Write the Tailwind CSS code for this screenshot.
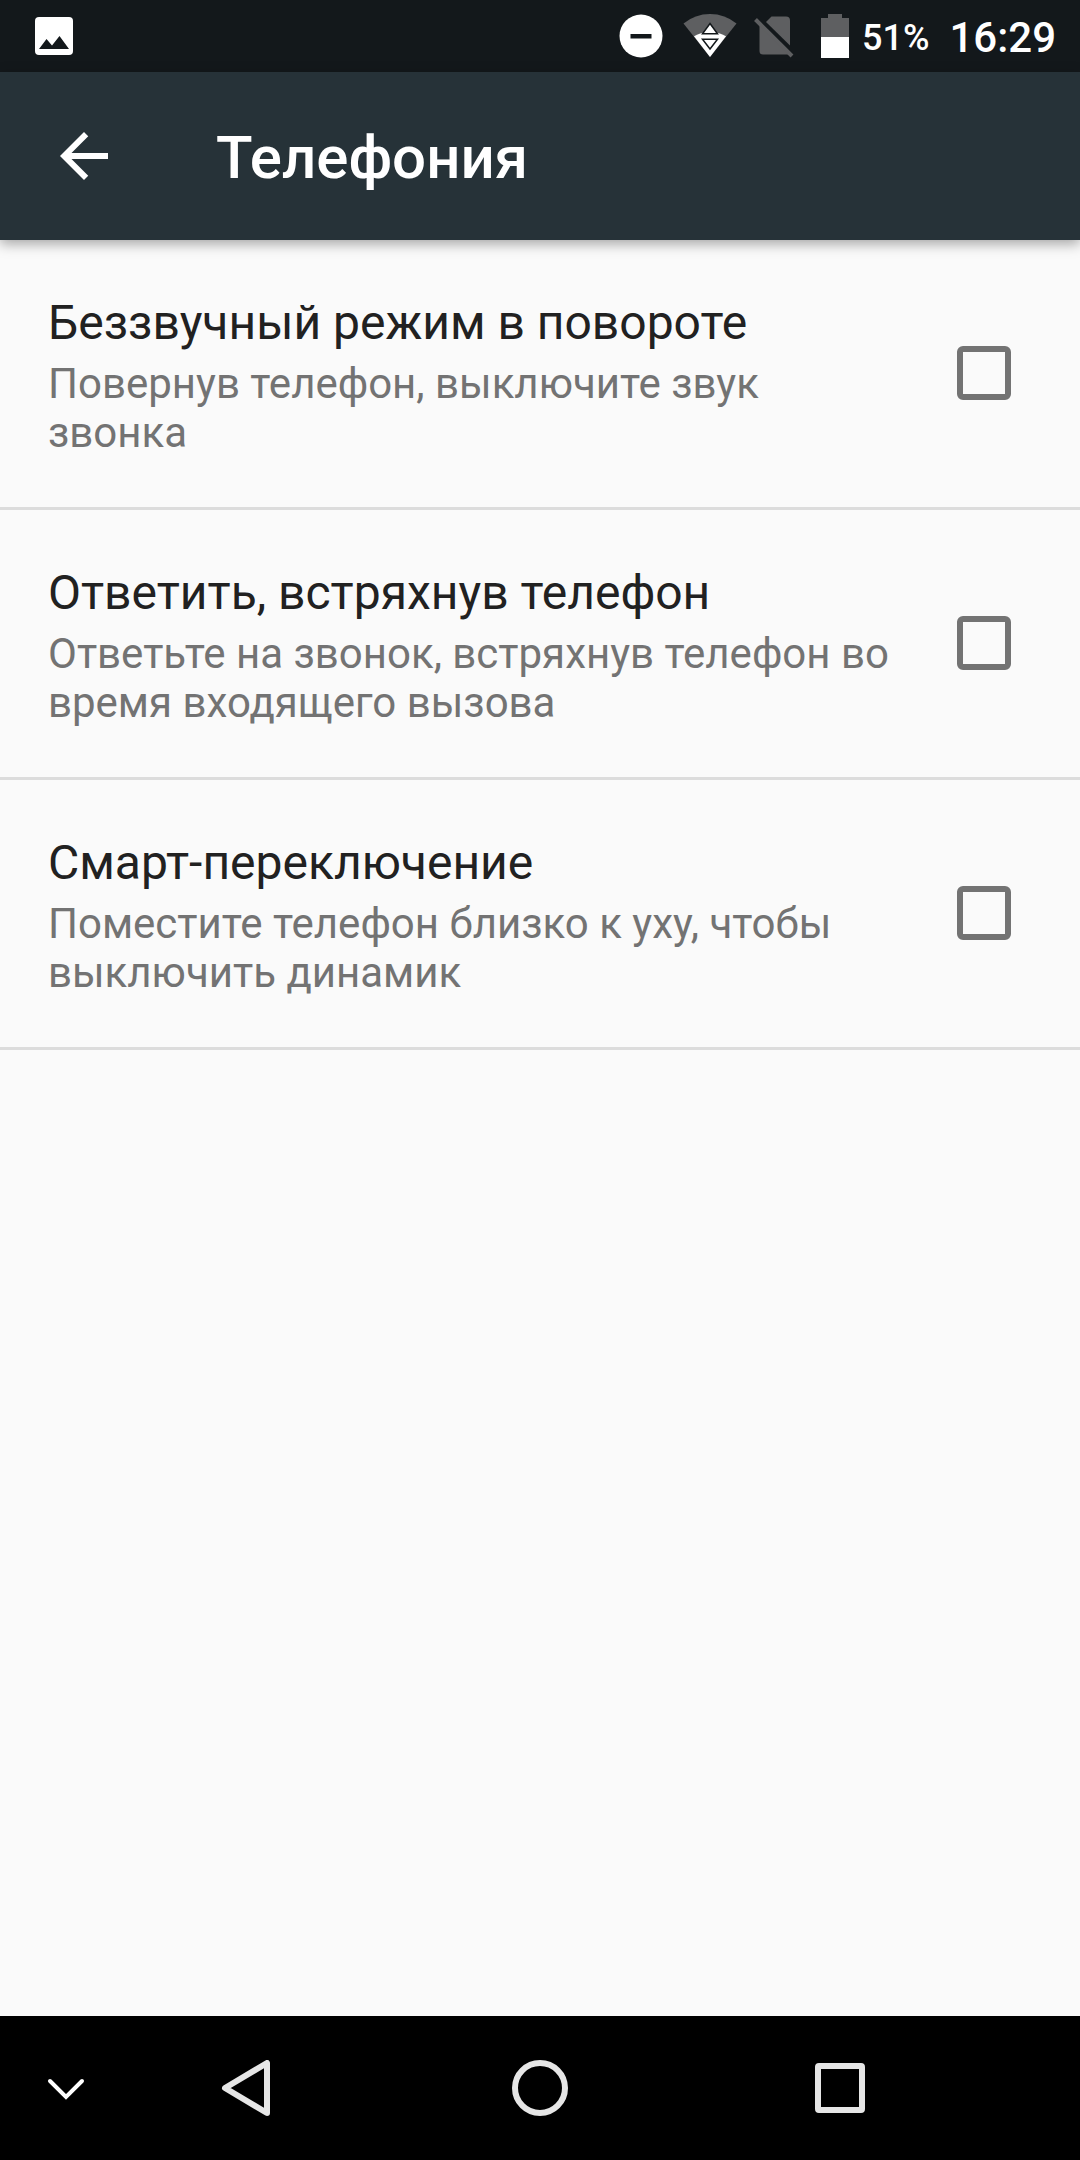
<!DOCTYPE html>
<html lang="ru">
  <head>
    <meta charset="UTF-8" />
    <meta name="viewport" content="width=device-width, initial-scale=1.0" />
    <title>Телефония</title>
    <script src="https://cdn.jsdelivr.net/npm/@tailwindcss/browser@4"></script>
  </head>
  <body class="flex min-h-screen flex-col bg-[#fafafa] font-[Roboto,sans-serif]">
    <!-- Status bar -->
    <div class="flex h-[72px] items-center justify-between bg-[#13181b] pr-6 pl-[35px] text-white">
      <svg class="h-[38px] w-[38px]" viewBox="0 0 38 38">
        <rect width="38" height="38" rx="4" fill="#fff" />
        <path d="M4 32 L11.500 22 L17 28.500 L24.500 19 L34 32 Z" fill="#13181b" />
      </svg>
      <div class="flex items-center">
        <svg class="mr-5 h-11 w-11" viewBox="0 0 44 44">
          <circle cx="22" cy="22" r="21.500" fill="#fff" />
          <rect x="11.500" y="20" width="21" height="4.500" fill="#13181b" />
        </svg>
        <svg class="mr-[17px] h-11 w-[54px]" viewBox="0 0 54 44">
          <path d="M0.500 9.500 Q12 0 27 0 Q42 0 53.500 9.500 L27 43 Z" fill="#5e5f61" />
          <path d="M11 22.300 Q18 18 27 18 Q36 18 43 22.300 L27 43 Z" fill="#fff" />
          <path d="M27 9.500 L34.500 19.700 H19.500 Z" fill="#fff" stroke="#13181b" stroke-width="1.500" />
          <path d="M27 35 L34.500 25.300 H19.500 Z" fill="#fff" stroke="#13181b" stroke-width="1.500" />
        </svg>
        <svg class="mr-[27px] h-11 w-10" viewBox="0 0 40 44">
          <path d="M12 8 L17.500 2.500 H32 Q36 2.500 36 6.500 V31.500 Z" fill="#5e5f61" />
          <path d="M5.500 10.500 L34.500 40.500 H9 Q5.500 40.500 5.500 37 Z" fill="#5e5f61" />
          <path d="M1.500 5.500 L38 42" stroke="#5e5f61" stroke-width="4" />
        </svg>
        <svg class="mr-[13px] h-11 w-7" viewBox="0 0 28 44">
          <path d="M0 4 H7 V0 H21 V4 H28 V24 H0 Z" fill="#5e5f61" />
          <path d="M0 23 H28 V44 H0 Z" fill="#fff" />
        </svg>
        <div class="flex items-center gap-5 pt-[3px] font-medium">
          <span class="text-[36px] leading-[42px]">51%</span>
          <span class="text-[42px] leading-[49px]">16:29</span>
        </div>
      </div>
    </div>

    <!-- App bar -->
    <header class="flex h-[168px] items-center gap-24 bg-[#263238] px-12 text-white shadow-[0_4px_12px_rgba(0,0,0,0.34)]">
      <button type="button" aria-label="Назад">
        <svg class="h-[72px] w-[72px]" viewBox="0 0 24 24" fill="currentColor">
          <path d="M20 11H7.830l5.590-5.590L12 4l-8 8 8 8 1.410-1.410L7.830 13H20v-2z" />
        </svg>
      </button>
      <h1 class="pt-1 text-[60px] leading-[70px] font-medium">Телефония</h1>
    </header>

    <!-- Settings list -->
    <main class="flex-1">
      <label class="flex items-center justify-between border-b-3 border-[#dcdcdc] pr-[69px] pl-12">
        <span class="flex max-w-[860px] flex-col gap-2 pt-[55px] pb-[50px]">
          <span class="text-[48px] leading-[56px] text-[#212121]">Беззвучный режим в повороте</span>
          <span class="text-[42px] leading-[49px] text-[#737373]">Повернув телефон, выключите звук звонка</span>
        </span>
        <input type="checkbox" class="mb-0.5 h-[54px] w-[54px] shrink-0 appearance-none rounded-md border-6 border-[#737373] checked:bg-[#737373]" />
      </label>
      <label class="flex items-center justify-between border-b-3 border-[#dcdcdc] pr-[69px] pl-12">
        <span class="flex max-w-[860px] flex-col gap-2 pt-[55px] pb-[50px]">
          <span class="text-[48px] leading-[56px] text-[#212121]">Ответить, встряхнув телефон</span>
          <span class="text-[42px] leading-[49px] text-[#737373]">Ответьте на звонок, встряхнув телефон во время входящего вызова</span>
        </span>
        <input type="checkbox" class="mb-0.5 h-[54px] w-[54px] shrink-0 appearance-none rounded-md border-6 border-[#737373] checked:bg-[#737373]" />
      </label>
      <label class="flex items-center justify-between border-b-3 border-[#dcdcdc] pr-[69px] pl-12">
        <span class="flex max-w-[860px] flex-col gap-2 pt-[55px] pb-[50px]">
          <span class="text-[48px] leading-[56px] text-[#212121]">Смарт-переключение</span>
          <span class="text-[42px] leading-[49px] text-[#737373]">Поместите телефон близко к уху, чтобы выключить динамик</span>
        </span>
        <input type="checkbox" class="mb-0.5 h-[54px] w-[54px] shrink-0 appearance-none rounded-md border-6 border-[#737373] checked:bg-[#737373]" />
      </label>
    </main>

    <!-- Navigation bar -->
    <nav class="flex h-36 items-center bg-black px-6 text-[#e6e6e6]">
      <button type="button" aria-label="Скрыть панель" class="flex w-[72px] justify-center">
        <svg class="h-14 w-[72px]" viewBox="0 0 72 56" fill="none" stroke="#fff" stroke-width="4" stroke-linecap="round">
          <path d="M26 21 L42 37 L58 21" />
        </svg>
      </button>
      <div class="grid flex-1 grid-cols-3 pr-[72px]">
        <button type="button" aria-label="Назад" class="flex justify-center">
          <svg class="h-14 w-14" viewBox="0 0 56 56" fill="none" stroke="currentColor" stroke-width="6" stroke-linejoin="round">
            <path d="M9 28 L51 3 V53 Z" />
          </svg>
        </button>
        <button type="button" aria-label="Домой" class="flex justify-center">
          <svg class="h-14 w-14" viewBox="0 0 56 56" fill="none" stroke="currentColor" stroke-width="6">
            <circle cx="28" cy="28" r="25" />
          </svg>
        </button>
        <button type="button" aria-label="Недавние" class="flex justify-center">
          <svg class="h-14 w-16" viewBox="0 0 64 56" fill="none" stroke="currentColor" stroke-width="6" stroke-linejoin="round">
            <rect x="14" y="6" width="44" height="44" rx="1" />
          </svg>
        </button>
      </div>
    </nav>
  </body>
</html>
